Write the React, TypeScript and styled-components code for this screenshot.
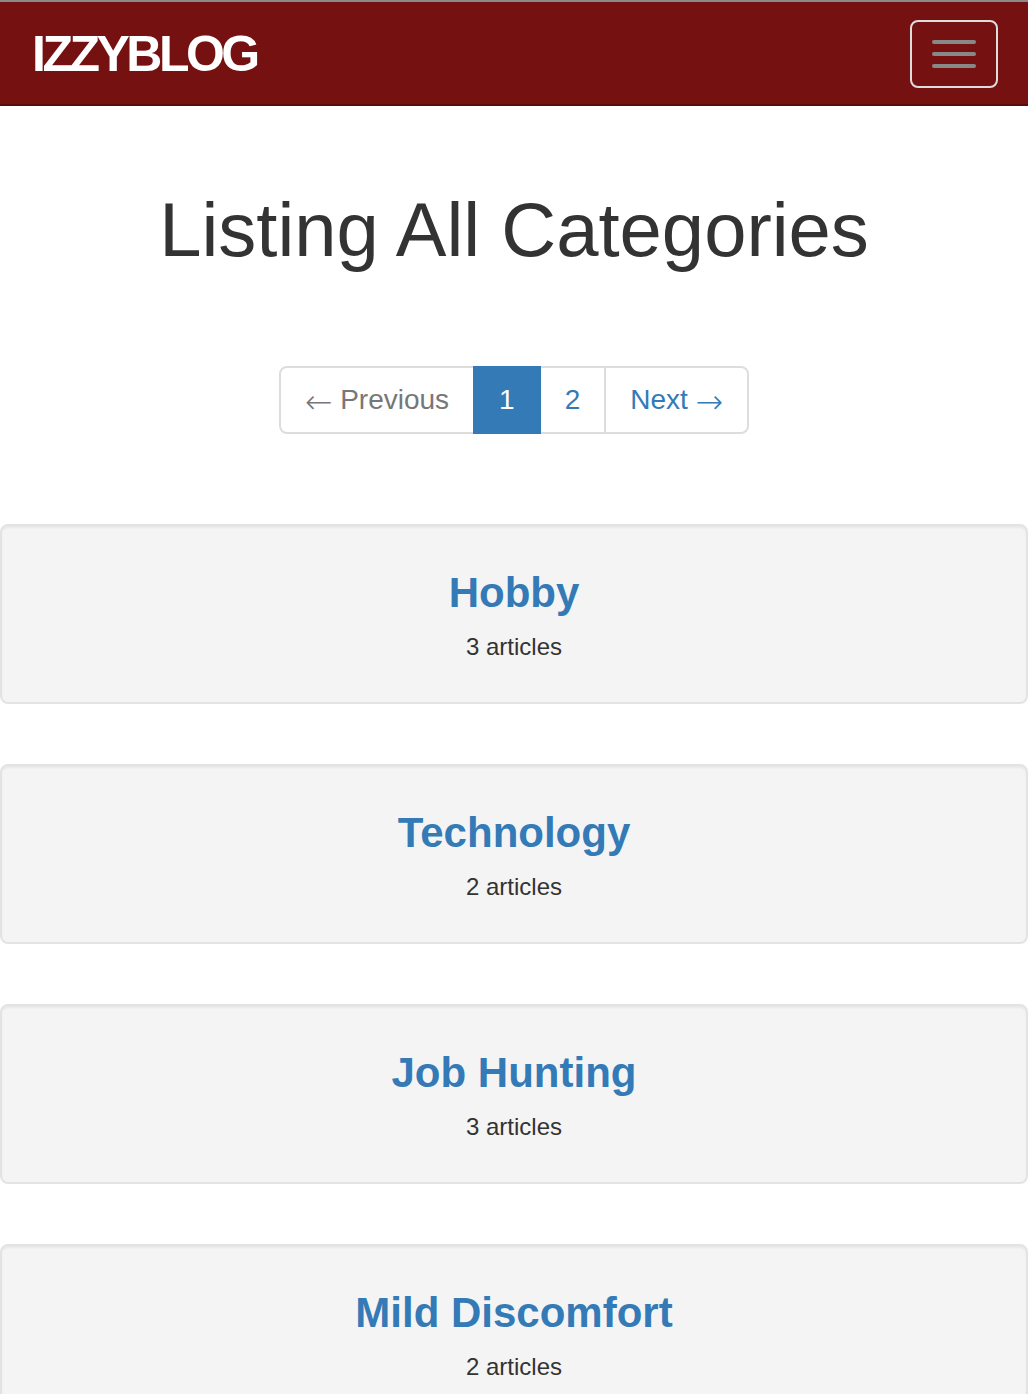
import React from "react";
import styled, { createGlobalStyle } from "styled-components";

const GlobalStyle = createGlobalStyle`
  html, body {
    margin: 0;
    padding: 0;
    background: #fff;
    font-family: "Liberation Sans", Arial, Helvetica, sans-serif;
    color: #333;
  }
  * { box-sizing: border-box; }
`;

const Navbar = styled.nav`
  display: flex;
  align-items: center;
  justify-content: space-between;
  height: 106px;
  background: #761111;
  border-top: 2px solid #8a8a8a;
  border-bottom: 2px solid #5a0c0c;
  padding: 0 30px 0 32px;
`;

const Brand = styled.a`
  font-size: 50px;
  font-weight: 700;
  letter-spacing: -3.5px;
  color: #fff;
  text-decoration: none;
  line-height: 1;
  margin-top: 2px;
`;

const Toggle = styled.button`
  display: flex;
  flex-direction: column;
  gap: 8px;
  width: 88px;
  height: 68px;
  padding: 18px 20px;
  justify-content: center;
  background: transparent;
  border: 2px solid #dddddd;
  border-radius: 8px;
  margin-top: 2px;
`;

const Bar = styled.span`
  display: block;
  width: 44px;
  height: 4px;
  border-radius: 2px;
  background: #888888;
`;

const Main = styled.main`
  display: flex;
  flex-direction: column;
  align-items: center;
`;

const Title = styled.h1`
  margin: 83px 0 0;
  font-size: 76px;
  line-height: 81px;
  font-weight: 500;
  color: #333;
  text-align: center;
`;

const Pager = styled.ul`
  display: flex;
  list-style: none;
  margin: 96px 0 0;
  padding: 0;
`;

const PageLink = styled.a<{ $active?: boolean; $disabled?: boolean; $pos?: "first" | "last" }>`
  display: block;
  font-size: 28px;
  line-height: 40px;
  height: 68px;
  padding: 12px 24px;
  margin-left: ${(p) => (p.$pos === "first" ? "0" : "-2px")};
  border: 2px solid ${(p) => (p.$active ? "#337ab7" : "#dddddd")};
  background: ${(p) => (p.$active ? "#337ab7" : "#fff")};
  color: ${(p) => (p.$active ? "#fff" : p.$disabled ? "#777777" : "#337ab7")};
  text-decoration: none;
  position: relative;
  z-index: ${(p) => (p.$active ? 2 : 0)};
  border-radius: ${(p) =>
    p.$pos === "first" ? "8px 0 0 8px" : p.$pos === "last" ? "0 8px 8px 0" : "0"};
`;

const Arrow = styled.span`
  font-family: "DejaVu Sans", sans-serif;
  font-size: 33px;
  font-weight: 300;
  line-height: 0;
  vertical-align: -4px;
`;

const CardList = styled.section`
  display: flex;
  flex-direction: column;
  gap: 60px;
  width: 100%;
  margin-top: 90px;
`;

const Card = styled.div`
  width: 100%;
  height: 180px;
  background: #f4f4f4;
  border: 2px solid #e3e3e3;
  border-radius: 8px;
  box-shadow: inset 0 2px 2px rgba(0, 0, 0, 0.05);
  display: flex;
  flex-direction: column;
  align-items: center;
  padding-top: 44px;
`;

const CardTitle = styled.a`
  font-size: 42px;
  line-height: 46px;
  font-weight: 700;
  color: #337ab7;
  text-decoration: none;
`;

const CardMeta = styled.p`
  margin: 14px 0 0;
  font-size: 24px;
  line-height: 34px;
  color: #333;
`;

const categories = [
  { name: "Hobby", count: 3 },
  { name: "Technology", count: 2 },
  { name: "Job Hunting", count: 3 },
  { name: "Mild Discomfort", count: 2 },
];

export default function App() {
  return (
    <>
      <GlobalStyle />
      <Navbar>
        <Brand href="#">IZZYBLOG</Brand>
        <Toggle aria-label="Toggle navigation">
          <Bar />
          <Bar />
          <Bar />
        </Toggle>
      </Navbar>
      <Main>
        <Title>Listing All Categories</Title>
        <Pager>
          <li>
            <PageLink $pos="first" $disabled>
              <Arrow>←</Arrow> Previous
            </PageLink>
          </li>
          <li>
            <PageLink $active href="#">1</PageLink>
          </li>
          <li>
            <PageLink href="#">2</PageLink>
          </li>
          <li>
            <PageLink $pos="last" href="#">
              Next <Arrow>→</Arrow>
            </PageLink>
          </li>
        </Pager>
        <CardList>
          {categories.map((c) => (
            <Card key={c.name}>
              <CardTitle href="#">{c.name}</CardTitle>
              <CardMeta>{c.count} articles</CardMeta>
            </Card>
          ))}
        </CardList>
      </Main>
    </>
  );
}
